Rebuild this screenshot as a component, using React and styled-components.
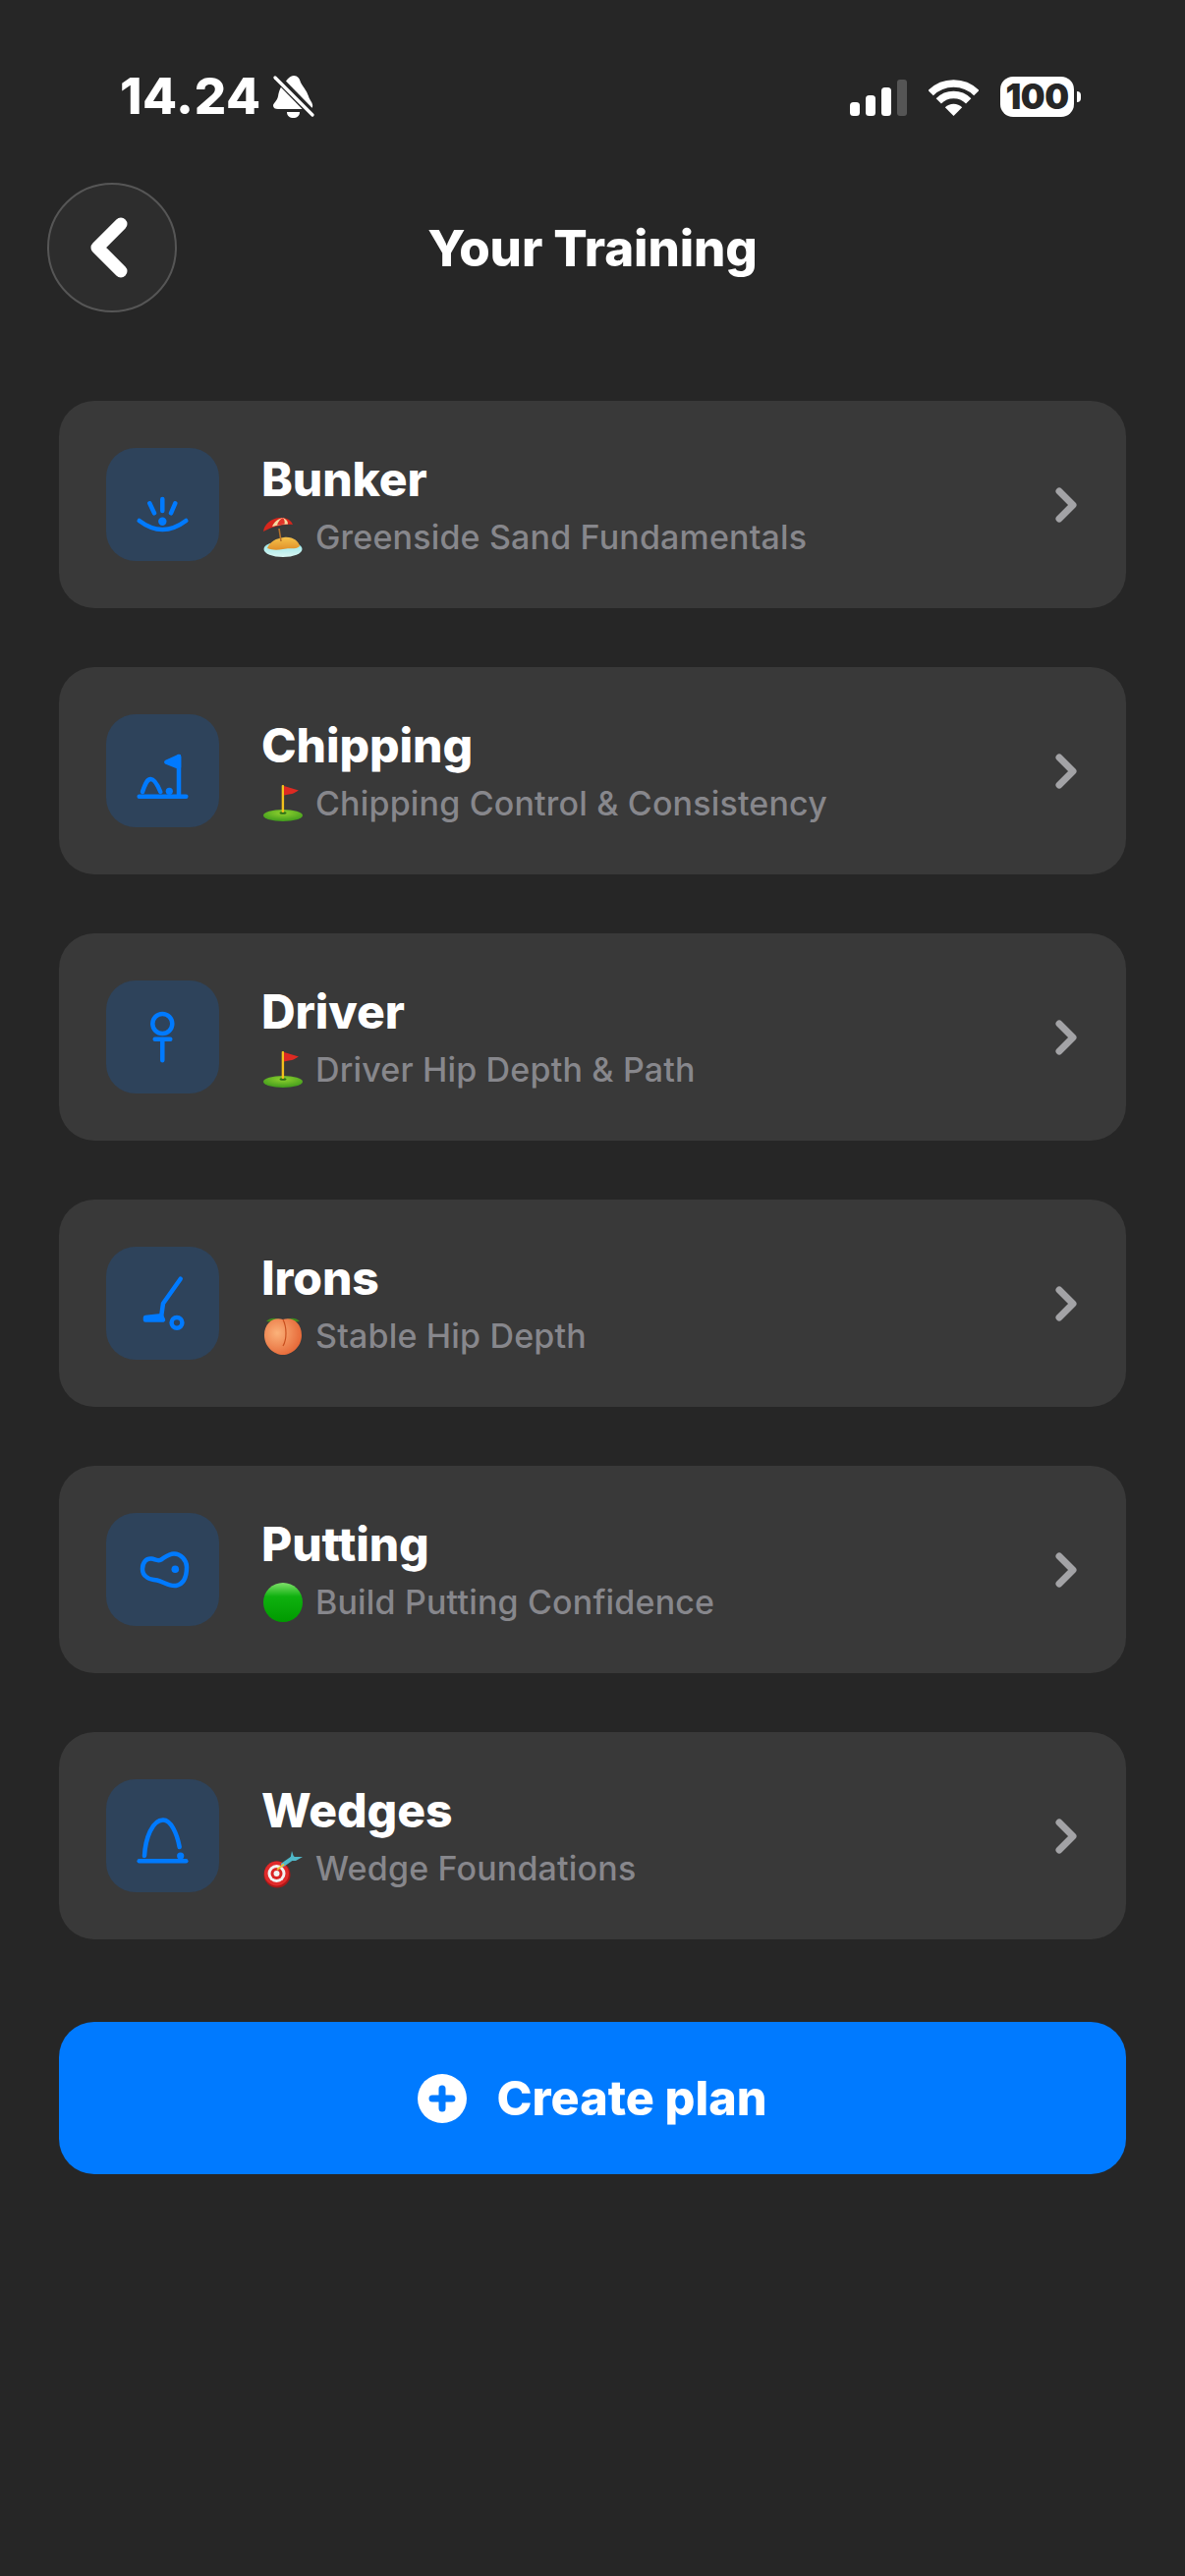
import React from "react";
import styled, { createGlobalStyle } from "styled-components";

const GlobalStyle = createGlobalStyle`
  html, body { margin: 0; padding: 0; background: #262626; }
  body { font-family: Inter, "Noto Sans", sans-serif; }
`;

const Screen = styled.div`
  width: 1206px;
  height: 2622px;
  background: #262626;
  display: flex;
  flex-direction: column;
  overflow: hidden;
`;

/* ---------- status bar ---------- */
const StatusBar = styled.div`
  height: 186px;
  box-sizing: border-box;
  padding: 76px 113px 0 122px;
  display: flex;
  justify-content: space-between;
  align-items: flex-start;
`;
const StatusLeft = styled.div`
  display: flex;
  align-items: center;
  gap: 12px;
  height: 44px;
`;
const Clock = styled.span`
  font-size: 51px;
  font-weight: 800;
  line-height: 44px;
  color: #fff;
  letter-spacing: 0.6px;
`;
const StatusRight = styled.div`
  display: flex;
  align-items: center;
  height: 44px;
`;
const Battery = styled.div`
  width: 75px;
  height: 41px;
  margin-left: 22px;
  background: #fff;
  border-radius: 13px;
  color: #262626;
  font-size: 35px;
  font-weight: 900;
  letter-spacing: -0.5px;
  display: flex;
  align-items: center;
  justify-content: center;
  position: relative;
  &::after {
    content: "";
    position: absolute;
    right: -7px;
    top: 15px;
    width: 4px;
    height: 11px;
    background: #fff;
    border-radius: 0 6px 6px 0;
  }
`;

/* ---------- header ---------- */
const Header = styled.header`
  display: grid;
  grid-template-columns: 132px 1fr 132px;
  align-items: center;
  padding: 0 48px;
  height: 132px;
  margin-bottom: 90px;
`;
const BackButton = styled.button`
  width: 132px;
  height: 132px;
  box-sizing: border-box;
  border-radius: 50%;
  border: 2px solid #565656;
  background: #2d2d2d;
  padding: 0;
  display: flex;
  align-items: center;
  justify-content: center;
`;
const Title = styled.h1`
  margin: 0;
  text-align: center;
  color: #fff;
  font-size: 51px;
  font-weight: 800;
  letter-spacing: -0.1px;
`;

/* ---------- plan list ---------- */
const List = styled.ul`
  list-style: none;
  margin: 0;
  padding: 0 60px;
  display: flex;
  flex-direction: column;
  gap: 60px;
`;
const Card = styled.li`
  height: 211px;
  box-sizing: border-box;
  background: #393939;
  border-radius: 36px;
  padding: 0 50px 0 48px;
  display: flex;
  align-items: center;
`;
const Tile = styled.div`
  width: 115px;
  height: 115px;
  flex: none;
  border-radius: 30px;
  background: #2e435b;
  margin-right: 43px;
`;
const Body = styled.div`
  flex: 1;
  min-width: 0;
  padding-top: 3px;
  display: flex;
  flex-direction: column;
`;
const CardTitle = styled.div`
  color: #fff;
  font-size: 48px;
  font-weight: 800;
  line-height: 56px;
  letter-spacing: -0.1px;
  margin-top: -2px;
`;
const Subtitle = styled.div`
  display: flex;
  align-items: center;
  gap: 13px;
  height: 44px;
  margin-top: 9px;
  color: #87878c;
  font-size: 34px;
  font-weight: 500;
  letter-spacing: 0.17px;
  padding-left: 2px;
`;

/* ---------- call to action ---------- */
const CreateButton = styled.button`
  margin: 84px 60px 0;
  height: 155px;
  border: none;
  border-radius: 36px;
  background: #007aff;
  color: #fff;
  font-family: inherit;
  font-size: 48.5px;
  font-weight: 800;
  display: flex;
  align-items: center;
  justify-content: center;
  gap: 30px;
`;

/* ---------- line icons, drawn on the 115px tile ---------- */
const BLUE = "#007aff";
const Line = (props) => (
  <svg width="115" height="115" viewBox="0 0 115 115" fill="none" stroke={BLUE} strokeWidth="4.5" strokeLinecap="round" strokeLinejoin="round" {...props} />
);

const BunkerIcon = () => (
  <Line>
    <path d="M33.7 74Q57.3 92 81.3 74" />
    <circle cx="57.3" cy="74.7" r="4.2" fill={BLUE} stroke="none" />
    <path d="M57.3 52V64M44.3 56.3 49 66.3M70.3 56.3 66 66.3" />
  </Line>
);
const ChippingIcon = () => (
  <Line>
    <path d="M33.7 83.7H81.3" />
    <path d="M37 79C40 70 42 66 45.5 66C49 66 52 71 55.3 79" />
    <circle cx="64.3" cy="78.3" r="3.6" fill={BLUE} stroke="none" />
    <path d="M74 83V43" />
    <path d="M74 43 61.3 48.7 74 53.7Z" fill={BLUE} />
  </Line>
);
const DriverIcon = () => (
  <Line>
    <circle cx="57.3" cy="44" r="10" />
    <path d="M49.7 59.7H65.3M57.3 59.7V81.3" />
  </Line>
);
const IronsIcon = () => (
  <Line>
    <path d="M75.7 32.7 58 57.7 56 72" />
    <path d="M40 72 56 70.3 58 74.5H40Z" fill={BLUE} />
    <circle cx="72" cy="77.3" r="5.4" />
  </Line>
);
const PuttingIcon = () => (
  <Line>
    <path d="M37 57C37 50 41 46 46 46.5C50 47 52 49.5 56 47.5C60 45 64 41.5 69 41.5C76 41.5 82 48 82 55C82 62 81 72 71 74C65 75 58 70 52 68.5C47 67.5 44 68 41 65C38 63 37 60 37 57Z" />
    <circle cx="70.3" cy="57.3" r="3.8" fill={BLUE} stroke="none" />
  </Line>
);
const WedgesIcon = () => (
  <Line>
    <path d="M33.7 83.3H81.3" />
    <path d="M39 78C40 60 47 41.5 58 41.5C66 41.5 72 55 74.7 69" />
    <circle cx="75.7" cy="78" r="3.6" fill={BLUE} stroke="none" />
  </Line>
);

/* ---------- small colour pictograms beside the subtitles ---------- */
const Pict = (props) => <svg width="40" height="40" viewBox="0 0 40 40" style={{ flex: "none" }} {...props} />;

const BeachPict = () => (
  <Pict>
    <defs>
      <linearGradient id="sand" x1="0" y1="0" x2="0" y2="1">
        <stop offset="0" stopColor="#f5c24a" />
        <stop offset="1" stopColor="#e0902a" />
      </linearGradient>
      <linearGradient id="sea" x1="0" y1="0" x2="0" y2="1">
        <stop offset="0" stopColor="#8fe3e6" />
        <stop offset="1" stopColor="#d9f6f2" />
      </linearGradient>
    </defs>
    <ellipse cx="20" cy="32" rx="19.5" ry="8" fill="url(#sea)" />
    <path d="M4 31C7 24 13 21 21 20C30 19 36 24 37 29C32 33 27 30 20 32C14 33 9 33 4 31Z" fill="url(#sand)" />
    <path d="M16 11 18 24" stroke="#b5722a" strokeWidth="1.6" fill="none" />
    <path d="M0 14C1 5 11-1 20 0C26 1 29 4 30 7C21 6 9 9 0 14Z" fill="#d8261c" />
    <path d="M9 9C11 4 15 1 20 0C24 2 25 4 25 6.500C19 6.500 14 7.500 9 9Z" fill="#f3d9a0" />
    <path d="M14 7.500C15 4 17 1.500 20 0C21.500 2 22 4 21.500 6.500Z" fill="#e0342a" />
  </Pict>
);
const FlagPict = () => (
  <Pict>
    <defs>
      <radialGradient id="green" cx="0.5" cy="0.3" r="0.7">
        <stop offset="0" stopColor="#8ed12e" />
        <stop offset="1" stopColor="#3f9a1c" />
      </radialGradient>
    </defs>
    <ellipse cx="20" cy="32" rx="20" ry="6" fill="url(#green)" />
    <ellipse cx="20" cy="29.500" rx="3.500" ry="1.300" fill="#2f6d18" />
    <rect x="18.700" y="1" width="2.400" height="28" rx="1" fill="#f2c11c" />
    <path d="M21 2 36 6.500C33 8 31 10 26 10.500L21 11.500Z" fill="#dd2a22" />
  </Pict>
);
const PeachPict = () => (
  <Pict>
    <defs>
      <radialGradient id="peach" cx="0.35" cy="0.4" r="0.75">
        <stop offset="0" stopColor="#fbb27a" />
        <stop offset="1" stopColor="#e35f2f" />
      </radialGradient>
    </defs>
    <path d="M3 5C7 1 13 1 18 4L12 6ZM37 5C33 1 27 1 22 4L28 6Z" fill="#3f8a1d" />
    <path d="M20 3C28 0 39 5 39 19C39 31 29 39 20 39C11 39 1 31 1 19C1 5 12 0 20 3Z" fill="url(#peach)" />
    <path d="M20 3C24 11 24 23 20 30" stroke="#c9501f" strokeWidth="1.200" fill="none" />
  </Pict>
);
const GreenBallPict = () => (
  <Pict>
    <defs>
      <linearGradient id="ball" x1="0" y1="0" x2="0" y2="1">
        <stop offset="0" stopColor="#7fe06a" />
        <stop offset="0.35" stopColor="#0fb10f" />
        <stop offset="1" stopColor="#009a00" />
      </linearGradient>
    </defs>
    <circle cx="20" cy="20" r="20" fill="url(#ball)" />
  </Pict>
);
const DartPict = () => (
  <Pict>
    <circle cx="14" cy="26" r="13.500" fill="#a81818" />
    <circle cx="13.500" cy="25" r="12.500" fill="#e02a2a" />
    <circle cx="13.500" cy="25" r="9" fill="#f2f2f2" />
    <circle cx="13.500" cy="25" r="6" fill="#d92424" />
    <circle cx="13.500" cy="25" r="3" fill="#f2f2f2" />
    <path d="M20 16 30 9" stroke="#4fb8c9" strokeWidth="4" strokeLinecap="round" />
    <path d="M14 21 21 15.500" stroke="#e8c33a" strokeWidth="2" />
    <path d="M29 2 31 8 40 8 33 12 27 12Z" fill="#4fb8c9" />
  </Pict>
);

const Chevron = () => (
  <svg width="22" height="36" viewBox="0 0 22 36" fill="none" stroke="#a3a3a6" strokeWidth="7" strokeLinecap="round" strokeLinejoin="round" style={{ flex: "none" }}>
    <path d="M4 4 18 18 4 32" />
  </svg>
);

const plans = [
  { name: "Bunker", sub: "Greenside Sand Fundamentals", Icon: BunkerIcon, Emoji: BeachPict },
  { name: "Chipping", sub: "Chipping Control & Consistency", Icon: ChippingIcon, Emoji: FlagPict },
  { name: "Driver", sub: "Driver Hip Depth & Path", Icon: DriverIcon, Emoji: FlagPict },
  { name: "Irons", sub: "Stable Hip Depth", Icon: IronsIcon, Emoji: PeachPict },
  { name: "Putting", sub: "Build Putting Confidence", Icon: PuttingIcon, Emoji: GreenBallPict },
  { name: "Wedges", sub: "Wedge Foundations", Icon: WedgesIcon, Emoji: DartPict },
];

export default function App() {
  return (
    <Screen>
      <GlobalStyle />
      <StatusBar>
        <StatusLeft>
          <Clock>14.24</Clock>
          <svg width="42" height="44" viewBox="0 0 42 44">
            <path d="M21 1C25 1 27 4 28 8C30 12 34 16 36 22C37 26 41 29 40 33C39 35 37 35 35 35H5C2 35 0 34 0 31.500C0 29 4 27 5 22C6 16 8 11 12 8C14 5 17 1 21 1Z" fill="#fff" />
            <path d="M14 38H27C27 42 24 44 20.500 44C17 44 14 42 14 38Z" fill="#fff" />
            <path d="M1 0 42 42" stroke="#262626" strokeWidth="8" />
            <path d="M2 3 40 41" stroke="#fff" strokeWidth="3.200" strokeLinecap="round" />
          </svg>
        </StatusLeft>
        <StatusRight>
          <svg width="58" height="37" viewBox="0 0 58 37" style={{ marginTop: 3 }}>
            <rect x="0" y="23" width="10" height="14" rx="3.500" fill="#fff" />
            <rect x="16" y="16" width="10" height="21" rx="3.500" fill="#fff" />
            <rect x="32" y="8" width="10" height="29" rx="3.500" fill="#fff" />
            <rect x="48" y="0" width="10" height="37" rx="3" fill="#555" />
          </svg>
          <svg width="51" height="37" viewBox="0 0 51 37" style={{ marginLeft: 22, marginTop: 3 }} fill="none">
            <path d="M2.200 13.700A33 33 0 0 1 48.800 13.700" stroke="#fff" strokeWidth="7.500" />
            <path d="M10.300 21.800A21.500 21.500 0 0 1 40.700 21.800" stroke="#fff" strokeWidth="7.500" />
            <path d="M25.500 37 16.800 28.300A12.300 12.300 0 0 1 34.200 28.300Z" fill="#fff" />
          </svg>
          <Battery>100</Battery>
        </StatusRight>
      </StatusBar>

      <Header>
        <BackButton aria-label="Back">
          <svg width="44" height="64" viewBox="0 0 44 64" fill="none" stroke="#fff" strokeWidth="13" strokeLinecap="round" strokeLinejoin="round" style={{ marginLeft: -6 }}>
            <path d="M34 8 10 32 34 56" />
          </svg>
        </BackButton>
        <Title>Your Training</Title>
        <span />
      </Header>

      <List>
        {plans.map(({ name, sub, Icon, Emoji }) => (
          <Card key={name}>
            <Tile><Icon /></Tile>
            <Body>
              <CardTitle>{name}</CardTitle>
              <Subtitle><Emoji />{sub}</Subtitle>
            </Body>
            <Chevron />
          </Card>
        ))}
      </List>

      <CreateButton>
        <svg width="50" height="50" viewBox="0 0 50 50">
          <circle cx="25" cy="25" r="25" fill="#fff" />
          <path d="M25 15V35M15 25H35" stroke="#007aff" strokeWidth="7" strokeLinecap="round" />
        </svg>
        Create plan
      </CreateButton>
    </Screen>
  );
}
